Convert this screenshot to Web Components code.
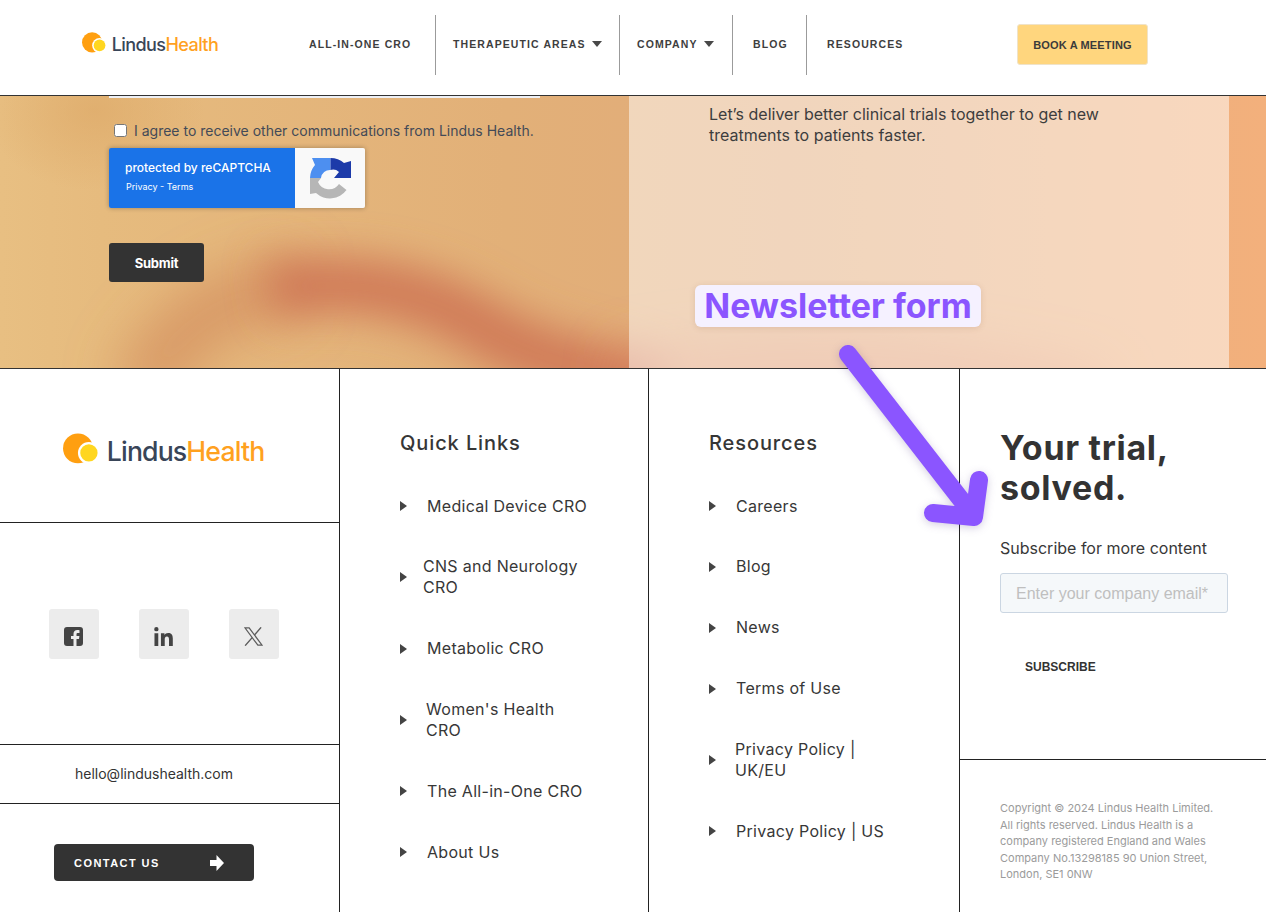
<!DOCTYPE html>
<html lang="en">
<head>
<meta charset="utf-8">
<title>Lindus Health</title>
<style>
	html, body { margin: 0; height: 912px; overflow: hidden; background: #fff; }
	body { font-family: Inter, "Liberation Sans", sans-serif; color: #333; position: relative; }
</style>
</head>
<body>
<site-header></site-header>
<hero-band></hero-band>
<site-footer></site-footer>
<newsletter-note></newsletter-note>

<script>
const logo = (w) => `
	<svg width="${w}" viewBox="0 0 202 32" style="display:block;overflow:visible" role="img" aria-label="Lindus Health">
		<circle cx="15" cy="15.500" r="15" fill="#ff9f10"/>
		<circle cx="26" cy="20" r="11" fill="#fff"/>
		<circle cx="26" cy="20" r="8.700" fill="#ffd61f"/>
		<text x="44" y="28" font-family="Inter, 'Liberation Sans', sans-serif" font-size="26.800" font-weight="500" letter-spacing="-.85" fill="#394558">Lindus<tspan fill="#ffa11f">Health</tspan></text>
	</svg>`;

class SiteHeader extends HTMLElement {
	constructor() {
		super();
		this.attachShadow({mode:'open'});
		this.shadowRoot.innerHTML = `
			<style>
				:host {
					box-sizing: border-box;
					display: flex;
					align-items: center;
					height: 96px;
					border-bottom: 1px solid #333;
					background: #fff;
					padding-left: 82px;
				}
				.logo { width: 227px; margin-bottom: 9px; }
				nav { display: flex; height: 60px; margin-bottom: 5px; }
				a {
					display: flex;
					align-items: center;
					gap: 6px;
					box-sizing: border-box;
					height: 100%;
					padding-bottom: 2px;
					font: 600 10.5px "Liberation Sans", sans-serif;
					letter-spacing: 1.1px;
					color: #3e3e3e;
					white-space: nowrap;
				}
				a + a { border-left: 1px solid #9b9b9b; }
				i { border: 5.500px solid transparent; border-top: 6px solid #484848; border-bottom: 0; }
				button {
					margin-left: 116px;
					margin-bottom: 6px;
					width: 131px;
					height: 41px;
					padding: 0;
					background: #ffd67e;
					border: 1px solid #f0e3c8;
					border-radius: 3px;
					font: 700 11px "Liberation Sans", sans-serif;
					letter-spacing: .15px;
					color: #3b3b3b;
				}
			</style>
			<div class="logo">${logo(136)}</div>
			<nav>
				<a style="width:126px">ALL-IN-ONE CRO</a>
				<a style="width:184px;padding-left:17px">THERAPEUTIC AREAS <i></i></a>
				<a style="width:113px;padding-left:17px">COMPANY <i></i></a>
				<a style="width:74px;padding-left:20px">BLOG</a>
				<a style="width:95px;padding-left:20px">RESOURCES</a>
			</nav>
			<button>BOOK A MEETING</button>`;
	}
}

class HeroBand extends HTMLElement {
	constructor() {
		super();
		this.attachShadow({mode:'open'});
		this.shadowRoot.innerHTML = `
			<style>
				:host {
					position: relative;
					display: grid;
					grid-template-columns: 629px 600px 37px;
					height: 272px;
					overflow: hidden;
					background:
						radial-gradient(110px 80px at 95px 15px, rgba(222,170,105,.7), transparent),
						linear-gradient(90deg, #e8bf82 0%, #e6bb7e 8%, #e2b078 40%, #e2ab7a 62%, #e6ad7c 75%, #f3b07c 100%);
				}
				.glow { position: absolute; left: 0; top: 0; }
				.form, .panel { position: relative; }
				.form { padding-left: 109px; }
				.line { height: 2px; width: 431px; background: #eef0f5; }
				label {
					display: flex;
					align-items: center;
					gap: 7px;
					margin: 24px 0 0 5px;
					font-size: 14px;
					line-height: 17px;
					color: #434a57;
				}
				input { margin: 0; width: 13px; height: 13px; }
				re-badge { margin-top: 9px; }
				button {
					display: block;
					width: 95px;
					height: 39px;
					margin-top: 35px;
					background: #333;
					border: 0;
					border-radius: 3px;
					color: #fff;
					font: 700 13px Inter, sans-serif;
					letter-spacing: -.2px;
				}
				.panel { background: rgba(255,255,255,.5); padding-left: 80px; }
				p {
					margin: 8px 0 0;
					width: 420px;
					font-size: 16px;
					line-height: 21px;
					color: #3d3d3d;
				}
			</style>
			<svg class="glow" width="1266" height="272" viewBox="0 0 1266 272">
				<defs>
					<filter id="b1" filterUnits="userSpaceOnUse" x="-200" y="-200" width="1700" height="700"><feGaussianBlur stdDeviation="26"/></filter>
					<filter id="b2" filterUnits="userSpaceOnUse" x="-200" y="-200" width="1700" height="700"><feGaussianBlur stdDeviation="20"/></filter>
				</defs>
				<path d="M140 300C170 230 230 195 300 190" fill="none" stroke="rgba(206,130,85,.6)" stroke-width="60" filter="url(#b1)"/>
				<path d="M270 195C340 180 420 192 480 230S590 270 660 295" fill="none" stroke="rgba(205,112,82,.85)" stroke-width="56" filter="url(#b2)"/>
				<path d="M620 290C760 270 900 260 1100 310" fill="none" stroke="rgba(222,130,95,.5)" stroke-width="60" filter="url(#b1)"/>
			</svg>
			<div class="form">
				<div class="line"></div>
				<label><input type="checkbox">I agree to receive other communications from Lindus Health.</label>
				<re-badge></re-badge>
				<button>Submit</button>
			</div>
			<div class="panel"><p>Let’s deliver better clinical trials together to get new treatments to patients faster.</p></div>
			<div></div>`;
	}
}

class ReBadge extends HTMLElement {
	constructor() {
		super();
		this.attachShadow({mode:'open'});
		this.shadowRoot.innerHTML = `
			<style>
				:host {
					display: flex;
					width: 256px;
					height: 60px;
					border-radius: 2px;
					overflow: hidden;
					box-shadow: 0 0 5px rgba(0,0,0,.3);
				}
				.blue {
					box-sizing: border-box;
					width: 186px;
					padding: 12px 0 0 16px;
					background: #1a73e8;
					color: #fff;
				}
				b { display: block; font-size: 12px; font-weight: 500; line-height: 15px; }
				span { display: block; margin: 6px 0 0 1px; font-size: 9px; line-height: 11px; }
				.mark { flex: 1; display: flex; align-items: center; justify-content: center; background: #f9f9f9; }
			</style>
			<div class="blue"><b>protected by reCAPTCHA</b><span>Privacy - Terms</span></div>
			<div class="mark">
				<svg width="41" height="42" viewBox="0 0 41 42">
					<path d="M0 21A20.500 20.500 0 0 1 5 8L2 1H20.500V13A9 9 0 0 0 11 21Z" fill="#4d8ff0"/>
					<path d="M20.500 1A20.500 20.500 0 0 1 34 6L41 4V21H24L29 15A9 9 0 0 0 20.500 13Z" fill="#1c3aa9"/>
					<path d="M0 21H11L8 25A12 12 0 0 0 29 27L36.500 33A20.500 20.500 0 0 1 6 36L0 37Z" fill="#b6b6b6"/>
				</svg>
			</div>`;
	}
}

class FooterList extends HTMLElement {
	constructor() {
		super();
		this.attachShadow({mode:'open'});
	}
	connectedCallback() {
		// each item is "text~offset", the offset is the room between marker and text
		const rows = this.getAttribute('items').split(';').map(item => {
			const [text, gap] = item.split('~');
			return `<li style="--gap:${gap}px"><i></i><span>${text}</span></li>`;
		}).join('');
		this.shadowRoot.innerHTML = `
			<style>
				:host { display: block; padding: 61px 0 0 60px; }
				h3 {
					margin: 0 0 30px;
					font: 500 20px/26px Inter, sans-serif;
					letter-spacing: .9px;
					color: #363636;
				}
				ul { list-style: none; margin: 0; padding: 0; }
				li {
					display: flex;
					align-items: center;
					padding: 9.500px 0;
					margin-bottom: 20.850px;
					font-size: 16px;
					line-height: 21px;
					letter-spacing: .3px;
					color: #373737;
				}
				i {
					flex: none;
					border: 5.500px solid transparent;
					border-left: 7px solid #444;
					border-right: 0;
					margin-right: var(--gap);
				}
				span { width: 163px; }
			</style>
			<h3>${this.getAttribute('heading')}</h3>
			<ul>${rows}</ul>`;
	}
}

class SiteFooter extends HTMLElement {
	constructor() {
		super();
		this.attachShadow({mode:'open'});
		this.shadowRoot.innerHTML = `
			<style>
				:host {
					box-sizing: border-box;
					display: grid;
					grid-template-columns: 340px 309px 311px 306px;
					height: 544px;
					border-top: 1px solid #333;
					background: #fff;
				}
				.col { border-right: 1px solid #222; min-width: 0; }
				.col:last-child { border: 0; }
				.left { display: grid; grid-template-rows: 154px 222px 59px 1fr; }
				.left > div { border-bottom: 1px solid #222; }
				.left > div:last-child { border: 0; }
				.brand { display: flex; align-items: center; padding: 6px 0 0 63px; }
				.social { display: flex; gap: 40px; padding: 86px 0 0 49px; }
				.social a {
					display: flex;
					align-items: center;
					justify-content: center;
					width: 50px;
					height: 50px;
					background: #ececec;
					border-radius: 3px;
				}
				.social svg { margin: 4px 1px 0 0; }
				.mail { font-size: 14px; line-height: 58px; padding-left: 75px; color: #333; }
				.cta { padding: 40px 0 0 54px; }
				.cta a {
					box-sizing: border-box;
					display: flex;
					align-items: center;
					justify-content: space-between;
					width: 200px;
					height: 37px;
					padding: 0 30px 0 20px;
					background: #333;
					border-radius: 4px;
					color: #fff;
					font: 600 11px "Liberation Sans", sans-serif;
					letter-spacing: 1.45px;
				}
				.right { display: grid; grid-template-rows: 391px 1fr; }
				.sub { border-bottom: 1px solid #222; padding: 59px 0 0 40px; }
				h2 {
					margin: 0 0 29px;
					font: 700 34px/40px Inter, sans-serif;
					letter-spacing: .7px;
					color: #333;
				}
				.sub p { margin: 0 0 14px; font-size: 16px; line-height: 22px; color: #383838; }
				.field {
					box-sizing: border-box;
					width: 228px;
					height: 40px;
					padding-left: 15px;
					border: 1px solid #cbd6e2;
					border-radius: 3px;
					background: #f5f8fa;
					font: 16px/40px "Liberation Sans", sans-serif;
					color: #bfbfbf;
				}
				.go { margin: 47px 0 0 25px; font: 700 12px/14px "Liberation Sans", sans-serif; color: #333; }
				small {
					display: block;
					padding: 40px 50px 0 40px;
					font-size: 11px;
					line-height: 16.500px;
					color: #9b9b9b;
				}
			</style>
			<div class="col left">
				<div class="brand">${logo(201)}</div>
				<div class="social">
					<a><svg width="19" height="19" viewBox="0 0 19 19"><path fill-rule="evenodd" d="M3 0h13a3 3 0 0 1 3 3v13a3 3 0 0 1-3 3h-3.500v-7H15l.4-3h-2.900V7.300c0-.9.3-1.400 1.500-1.400h1.500V3.200c-.5 0-1.300-.2-2.200-.2-2.300 0-3.800 1.400-3.800 3.900V9H7v3h2.500v7H3a3 3 0 0 1-3-3V3a3 3 0 0 1 3-3z" fill="#444"/></svg></a>
					<a><svg width="19" height="19" viewBox="0 0 20 20"><path d="M.5 6.500h4V20h-4zM2.500 0a2.300 2.300 0 1 1 0 4.600 2.300 2.300 0 0 1 0-4.600zM7.300 6.500H11v1.900c.7-1.200 2-2.200 4-2.200 4 0 4.800 2.600 4.800 6V20h-4v-6.900c0-1.700-.3-3.200-2.200-3.200s-2.300 1.500-2.300 3.100v7h-4z" fill="#444"/></svg></a>
					<a><svg width="19" height="19" viewBox="0 0 20 20"><path fill="none" stroke="#5c5c5c" stroke-width="1.300" d="M1 .8h4.400L19 19.200h-4.400z"/><path fill="none" stroke="#5c5c5c" stroke-width="1.500" d="M18 .4 11 8.500M8.600 11.200 1.200 19.600"/></svg></a>
				</div>
				<div class="mail">hello@lindushealth.com</div>
				<div class="cta"><a>CONTACT US <svg width="14" height="16" viewBox="0 0 14 16"><path d="M0 5h6.500V0L14 8l-7.500 8v-5H0z" fill="#fff"/></svg></a></div>
			</div>
			<div class="col"><footer-list heading="Quick Links" items="Medical Device CRO~20;CNS and Neurology CRO~16;Metabolic CRO~20;Women's Health CRO~19;The All-in-One CRO~20;About Us~20"></footer-list></div>
			<div class="col"><footer-list heading="Resources" items="Careers~20;Blog~20;News~20;Terms of Use~20;Privacy Policy | UK/EU~19;Privacy Policy | US~20"></footer-list></div>
			<div class="col right">
				<div class="sub">
					<h2>Your trial, solved.</h2>
					<p>Subscribe for more content</p>
					<div class="field">Enter your company email*</div>
					<div class="go">SUBSCRIBE</div>
				</div>
				<small>Copyright © 2024 Lindus Health Limited. All rights reserved. Lindus Health is a company registered England and Wales Company No.13298185 90 Union Street, London, SE1 0NW</small>
			</div>`;
	}
}

class NewsletterNote extends HTMLElement {
	constructor() {
		super();
		this.attachShadow({mode:'open'});
		this.shadowRoot.innerHTML = `
			<style>
				:host { position: absolute; left: 0; top: 0; width: 0; height: 0; }
				div {
					position: absolute;
					left: 695px;
					top: 285px;
					box-sizing: border-box;
					width: 286px;
					height: 42px;
					border-radius: 6px;
					background: #f5f1ff;
					box-shadow: 0 1px 6px rgba(120,70,40,.15);
					color: #8b55ff;
					font: 700 34px/42px Inter, sans-serif;
					text-align: center;
					white-space: nowrap;
				}
				svg { position: absolute; left: 0; top: 0; overflow: visible; filter: drop-shadow(0 2px 4px rgba(60,30,120,.22)); }
			</style>
			<svg width="1266" height="912" viewBox="0 0 1266 912">
				<path d="M848 354 973 515M979 480 974 517 933 513" fill="none" stroke="#8b55ff" stroke-width="18" stroke-linecap="round" stroke-linejoin="round"/>
			</svg>
			<div>Newsletter form</div>`;
	}
}

customElements.define('re-badge', ReBadge);
customElements.define('footer-list', FooterList);
customElements.define('site-header', SiteHeader);
customElements.define('hero-band', HeroBand);
customElements.define('site-footer', SiteFooter);
customElements.define('newsletter-note', NewsletterNote);
</script>
</body>
</html>
